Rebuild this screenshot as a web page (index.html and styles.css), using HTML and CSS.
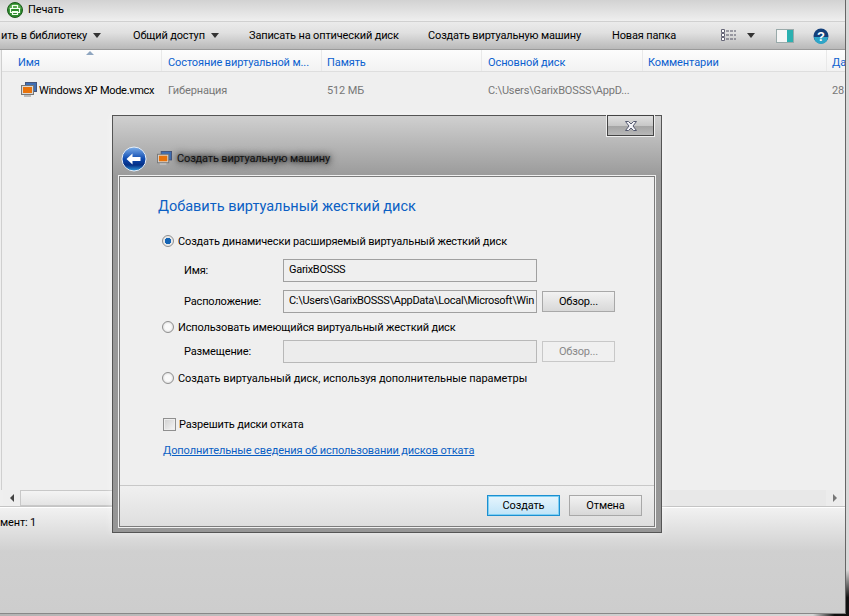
FILE: index.html
```html
<!DOCTYPE html>
<html lang="ru">
<head>
<meta charset="utf-8">
<title>Создать виртуальную машину</title>
<link rel="stylesheet" href="styles.css">
</head>
<body>
<div class="explorer">
  <div class="menubar">
    <svg class="print-icon" width="16" height="16" viewBox="0 0 16 16"><circle cx="8" cy="8" r="7.500" fill="#2c8a2c" stroke="#1c5a1c"/><path d="M1.500 7a6.500 5 0 0 1 13 0z" fill="#7cc46c" opacity=".5"/><path d="M5.500 6V3.500h5V6M3.500 6.500h9v4h-9zM5.500 9.500h5v3h-5z" fill="none" stroke="#f2fff0" stroke-width="1.200"/></svg>
    <span>Печать</span>
  </div>
  <div class="toolbar">
    <span class="tool tool-first">ить в библиотеку<i class="caret"></i></span>
    <span class="tool tool-share">Общий доступ<i class="caret"></i></span>
    <span class="tool tool-burn">Записать на оптический диск</span>
    <span class="tool tool-vm">Создать виртуальную машину</span>
    <span class="tool">Новая папка</span>
    <span class="tool-icons">
      <svg class="views" width="16" height="13" viewBox="0 0 16 13"><path d="M.5.500h3v3h-3zM.5 4.500h3v3h-3zM.5 8.500h3v3h-3z" fill="#fff" stroke="#667"/><path d="M5 2h10M5 6h10M5 10h10" stroke="#556" stroke-width="1.200" stroke-dasharray="3 1"/></svg>
      <i class="caret caret-views"></i>
      <svg class="pane" width="18" height="14" viewBox="0 0 18 14"><rect x=".5" y=".5" width="17" height="13" fill="#f6f6f6" stroke="#9aa"/><rect x="11" y="1" width="6" height="12" fill="#2bb0b0"/></svg>
      <svg class="help" width="16" height="16" viewBox="0 0 16 16"><circle cx="8" cy="8" r="7.500" fill="#123f7a"/><path d="M1 9a7 7 0 0 0 14 0z" fill="#2ea6c8"/><text x="8" y="12.500" class="help-q" text-anchor="middle">?</text></svg>
    </span>
  </div>
  <div class="list">
    <div class="header">
      <i class="sort"></i>
      <span class="col c1">Имя</span>
      <span class="col c2">Состояние виртуальной м...</span>
      <span class="col c3">Память</span>
      <span class="col c4">Основной диск</span>
      <span class="col c5">Комментарии</span>
      <span class="col c6">Да</span>
    </div>
    <div class="row">
      <span class="cell c1 name">
        <svg class="vm-icon" width="16" height="16" viewBox="0 0 16 16"><rect x="4.500" y=".5" width="11" height="9" fill="#3f6fb5" stroke="#46557a"/><rect x=".5" y="3.500" width="12" height="9" fill="#d9d9d9" stroke="#777"/><rect x="2" y="5" width="9" height="6" fill="#e8730c"/><rect x="3" y="13" width="7" height="2" fill="#bbb"/></svg>
        <span class="name-text">Windows XP Mode.vmcx</span>
      </span>
      <span class="cell c2">Гибернация</span>
      <span class="cell c3">512 МБ</span>
      <span class="cell c4">C:\Users\GarixBOSSS\AppD...</span>
      <span class="cell c5"></span>
      <span class="cell c6">28</span>
    </div>
  </div>
  <div class="hscroll">
    <span class="sb-btn"><i class="arrow-left"></i></span>
    <span class="sb-thumb"></span>
    <span class="sb-btn sb-end"><i class="arrow-right"></i></span>
  </div>
  <div class="status">мент: 1</div>
</div>

<div class="dialog">
  <div class="close"><svg width="16" height="12" viewBox="0 0 16 12"><path d="M2.500 1.500h3L8 4l2.500-2.500h3L10 6l3.500 4.500h-3L8 8l-2.500 2.500h-3L6 6z" fill="#f4f4f8" stroke="#555a70"/></svg></div>
  <div class="dlg-title">
    <svg class="back" width="26" height="26" viewBox="0 0 26 26"><defs><linearGradient id="bk" x1="0" y1="0" x2="0" y2="1"><stop offset="0" stop-color="#7fb0ea"/><stop offset=".5" stop-color="#0c49b0"/><stop offset=".75" stop-color="#052f85"/><stop offset="1" stop-color="#2f9be0"/></linearGradient></defs><circle cx="13" cy="13" r="12" fill="url(#bk)" stroke="#e6eef8" stroke-width="1"/><path d="M5.500 13l6-5.500v3.500h8v4h-8v3.500z" fill="#fff"/></svg>
    <svg class="title-icon" width="15" height="15" viewBox="0 0 16 16"><rect x="4.500" y=".5" width="11" height="9" fill="#3f6fb5" stroke="#46557a"/><rect x=".5" y="3.500" width="12" height="9" fill="#d9d9d9" stroke="#777"/><rect x="2" y="5" width="9" height="6" fill="#e8730c"/><rect x="3" y="13" width="7" height="2" fill="#bbb"/></svg>
    <span class="title-text">Создать виртуальную машину</span>
  </div>
  <div class="dlg-box">
    <div class="dlg-body">
      <h1 class="heading">Добавить виртуальный жесткий диск</h1>
      <div class="radio-row rr1"><i class="radio on"></i><span>Создать динамически расширяемый виртуальный жесткий диск</span></div>
      <div class="field f1"><span class="label">Имя:</span><span class="input">GarixBOSSS</span></div>
      <div class="field f2"><span class="label">Расположение:</span><span class="input">C:\Users\GarixBOSSS\AppData\Local\Microsoft\Win</span><span class="btn browse">Обзор...</span></div>
      <div class="radio-row rr2"><i class="radio"></i><span>Использовать имеющийся виртуальный жесткий диск</span></div>
      <div class="field f3"><span class="label">Размещение:</span><span class="input input-off"></span><span class="btn browse btn-off">Обзор...</span></div>
      <div class="radio-row rr3"><i class="radio"></i><span>Создать виртуальный диск, используя дополнительные параметры</span></div>
      <div class="check-row"><i class="check"></i><span>Разрешить диски отката</span></div>
      <a class="link" href="#">Дополнительные сведения об использовании дисков отката</a>
    </div>
    <div class="dlg-foot">
      <span class="btn act primary">Создать</span>
      <span class="btn act">Отмена</span>
    </div>
  </div>
</div>
</body>
</html>
```
FILE: styles.css
```css
* { box-sizing: border-box; }
html, body { margin: 0; padding: 0; }
body {
  width: 849px; height: 616px; overflow: hidden; position: relative;
  font: 11px/16px Roboto, "Liberation Sans", sans-serif; letter-spacing: -.15px;
  color: #000;
  background:
    radial-gradient(36px 46px at 100% 100%, #111 40%, rgba(17,17,17,0) 100%),
    linear-gradient(90deg, #b4b4b4, #d8d8d8);
}
i { display: block; font-style: normal; }
.explorer { width: 846px; height: 614px; display: flex; flex-direction: column; border-right: 1px solid #666; border-bottom: 1px solid #888; background: #efefef; }

.menubar {
  height: 21px; flex: none; display: flex; align-items: center; gap: 5px; padding: 0 0 2px 7px;
  background: linear-gradient(#d2d2d2, #efefef);
}
.print-icon { flex: none; }
.toolbar {
  height: 29px; flex: none; display: flex; align-items: center; position: relative;
  background: linear-gradient(#ebebeb, #e0e0e0 40%, #b9b9b9);
  border-top: 1px solid #d0d0d0; border-bottom: 1px solid #9a9a9a;
}
.tool { display: flex; align-items: center; white-space: nowrap; }
.tool-first { margin-left: 1px; width: 132px; gap: 6px; }
.tool-share { width: 116px; gap: 6px; }
.tool-burn { width: 179px; }
.tool-vm { width: 184px; }
.caret { width: 0; height: 0; border: 4px solid transparent; border-top: 5px solid #333; border-bottom: 0; }
.tool-icons { margin-left: auto; display: flex; align-items: center; }
.caret-views { margin: 0 21px 0 10px; }
.pane { margin-right: 19px; }
.help { margin-right: 16px; }
.help-q { font: bold 13px "Liberation Sans", sans-serif; fill: #fff; }

.list { flex: 1; position: relative; background: #efefef; border-left: 1px solid #cfcfcf; margin-left: 1px; }
.header {
  height: 22px; display: flex; position: relative;
  background: linear-gradient(#fdfdfd, #f2f2f2); border-bottom: 1px solid #dedede; color: #0b5fcf;
  letter-spacing: -.1px;
}
.sort { position: absolute; left: 84px; top: 1px; width: 0; height: 0; border: 4px solid transparent; border-bottom: 4px solid #8fa6c0; border-top: 0; }
.col { display: flex; align-items: flex-end; padding-bottom: 0; border-right: 1px solid #e9e9e9; white-space: nowrap; overflow: hidden; }
.c1 { width: 160px; padding-left: 16px; }
.c2 { width: 160px; padding-left: 6px; }
.c3 { width: 160px; padding-left: 5px; }
.c4 { width: 161px; padding-left: 6px; }
.c5 { width: 184px; padding-left: 5px; }
.c6 { width: 18px; padding-left: 5px; border-right: 0; }
.row { display: flex; margin-top: 11px; height: 16px; color: #777; }
.cell { display: flex; align-items: center; white-space: nowrap; overflow: hidden; }
.name { color: #000; gap: 2px; padding-left: 19px; overflow: visible; }
.name-text { letter-spacing: -.3px; }
.vm-icon { flex: none; margin-top: -2px; }

.hscroll { height: 16px; flex: none; display: flex; margin: 0 2px 0 3px; background: #e8e8e8; }
.sb-btn { width: 17px; flex: none; display: flex; align-items: center; justify-content: center; background: #eee; }
.sb-thumb { flex: 1; margin-right: 200px; background: linear-gradient(#f4f4f4, #e4e4e4); border: 1px solid #c8c8c8; }
.sb-end { margin-left: auto; background: #ececec; }
.arrow-left { width: 0; height: 0; border: 4px solid transparent; border-right: 4px solid #444; border-left: 0; }
.arrow-right { width: 0; height: 0; border: 4px solid transparent; border-left: 4px solid #777; border-right: 0; }

.status {
  height: 107px; flex: none; padding: 8px 0 0 0;
  background: linear-gradient(#f2f2f2, #d0d0d0 42%, #cdcdcd);
  border-top: 1px solid #c4c4c4; box-shadow: inset 0 1px 0 #fff;
}

.dialog {
  position: absolute; left: 112px; top: 115px; width: 550px; height: 418px;
  border: 1px solid #555; display: flex; flex-direction: column; padding: 0 6px 5px 6px;
  background: linear-gradient(#d0d0d0, #9a9a9a 60px, #969696);
  box-shadow: 0 0 8px rgba(255,255,255,.5);
}
.close {
  position: absolute; right: 7px; top: -1px; width: 47px; height: 21px;
  display: flex; align-items: center; justify-content: center;
  border: 1px solid #444; outline: 1px solid #eee;
  background: linear-gradient(#e0e0e0, #c8c8c8 50%, #a4a4a4 52%, #b8b8b8);
}
.dlg-title { height: 60px; flex: none; display: flex; align-items: center; padding-top: 25px; padding-left: 2px; }
.back { flex: none; margin-right: 10px; }
.title-icon { flex: none; margin-right: 5px; }
.title-text { color: #111; padding-top: 1px; text-shadow: 0 0 6px rgba(0,0,0,.8), 0 0 10px rgba(0,0,0,.7), 0 0 3px rgba(0,0,0,.4); }
.dlg-box {
  flex: 1; display: flex; flex-direction: column; background: #efefef;
  border: 1px solid #7c7c7c; outline: 1px solid #f0f0f0;
}
.dlg-body { flex: 1; padding: 20px 0 0 38px; }
.heading { margin: 0; font-size: 14.500px; line-height: 20px; font-weight: 400; letter-spacing: 0; color: #0b5fc4; }
.radio-row { display: flex; align-items: center; gap: 4px; height: 18px; padding-left: 4px; white-space: nowrap; }
.radio-row span { padding-top: 1px; }
.rr1 { margin-top: 15px; }
.rr2 { margin-top: 5px; }
.rr3 { margin-top: 6px; letter-spacing: -.05px; }
.radio {
  width: 12px; height: 12px; border-radius: 50%; flex: none;
  border: 1px solid #8f8f8f; background: radial-gradient(#fafafa 40%, #cfcfcf);
}
.radio.on { background: radial-gradient(#1464b4 0 3px, #e8e8e8 3.500px); }
.field { display: flex; align-items: center; gap: 5px; padding-left: 26px; height: 23px; }
.f1 { margin-top: 9px; }
.f2 { margin-top: 8px; }
.f3 { margin-top: 4px; }
.f2 .label, .f3 .label { padding-top: 1px; }
.label { width: 94px; flex: none; }
.input {
  width: 254px; height: 23px; flex: none; padding: 2px 0 0 5px; overflow: hidden; white-space: nowrap;
  border: 1px solid #a0a0a0; background: #efefef; letter-spacing: -.3px;
}
.input-off { background: #ececec; border-color: #b8b8b8; }
.btn {
  display: flex; align-items: center; justify-content: center; flex: none; width: 73px; height: 21px; padding-top: 1px;
  border: 1px solid #a8a8a8; background: linear-gradient(#f2f2f2, #d8d8d8);
}
.btn-off { background: #f0f0f0; color: #888; border-color: #c8c8c8; }
.check-row { display: flex; align-items: center; gap: 3px; height: 19px; margin-top: 28px; padding-left: 5px; white-space: nowrap; }
.check { width: 13px; height: 13px; flex: none; border: 1px solid #8f8f8f; background: linear-gradient(135deg, #d0d0d0, #f6f6f6); box-shadow: inset 0 0 0 1px #eee; }
.link { display: block; margin-top: 9px; padding-left: 5px; color: #0b5fc4; letter-spacing: -.1px; }
.dlg-foot {
  height: 41px; flex: none; display: flex; justify-content: flex-end; align-items: flex-start; gap: 9px;
  padding: 9px 12px 0 0; border-top: 1px solid #c8c8c8;
  background: linear-gradient(#f0f0f0, #dedede);
}
.primary { border: 1px solid #1c8fd0; background: linear-gradient(#e6f5fd, #bfe4f8); box-shadow: inset 0 0 0 1px #7fd0f4; }
```
